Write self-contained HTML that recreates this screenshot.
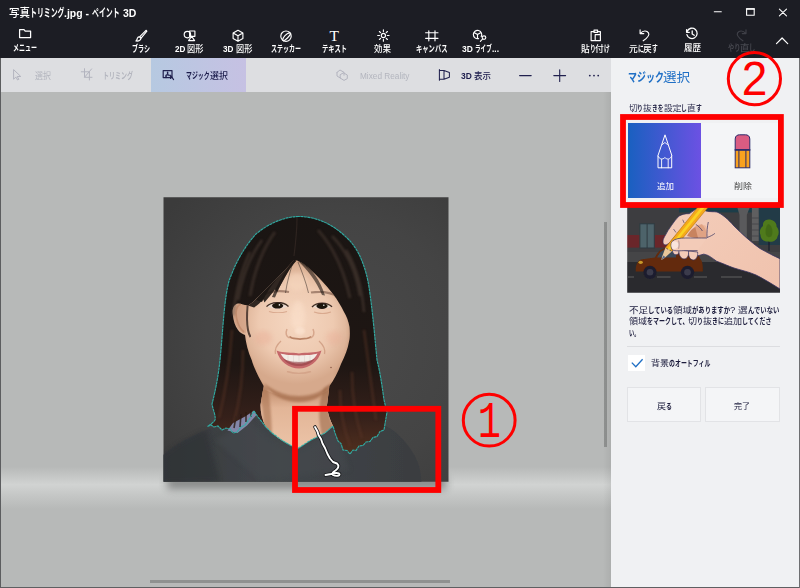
<!DOCTYPE html>
<html lang="ja"><head><meta charset="utf-8"><title>ペイント 3D</title>
<style>
*{box-sizing:border-box;margin:0;padding:0}
html,body{width:800px;height:588px;overflow:hidden;background:#b7b9b8}
body{position:relative;font-family:"Liberation Sans","Noto Sans CJK JP",sans-serif}
.t{position:absolute;white-space:pre;display:block}
.r{display:inline-block;vertical-align:top;height:100%}
.r>span{display:inline-block;transform-origin:0 50%}
#top{position:absolute;left:0;top:0;width:800px;height:58px;background:#1c1d24}
#bar{position:absolute;left:0;top:58px;width:611px;height:34px;background:#dddee1}
#magic{position:absolute;left:151px;top:0;width:95px;height:34px;background:linear-gradient(90deg,#b6c9e1,#c6c1e3)}
#canvas{position:absolute;left:0;top:92px;width:611px;height:496px;background:#b7b9b8;overflow:hidden}
#floor{position:absolute;left:0;top:375px;width:611px;height:42px;background:linear-gradient(180deg,rgba(228,230,229,0) 0%,rgba(228,230,229,.3) 22%,rgba(228,230,229,.58) 42%,rgba(228,230,229,.3) 68%,rgba(228,230,229,0) 100%)}
#pshadow{position:absolute;left:167px;top:385px;width:279px;height:12px;background:#7f8180;filter:blur(4.5px);opacity:.95}
#vs{position:absolute;left:604.2px;top:129.5px;width:2.7px;height:225px;background:#8f9190}
#hs{position:absolute;left:149.5px;top:488.3px;width:300px;height:2.6px;background:#8f9190}
#edge{position:absolute;left:603px;top:0;width:8px;height:496px;background:linear-gradient(90deg,rgba(0,0,0,0),rgba(0,0,0,.06))}
#panel{position:absolute;left:611px;top:58px;width:189px;height:530px;background:#f0f1f3}
#wl{position:absolute;left:0;top:58px;width:1px;height:530px;background:#5c5d5f}
#wb{position:absolute;left:0;top:587px;width:800px;height:1px;background:#5e5f61}
#wr{position:absolute;left:798.5px;top:58px;width:1.5px;height:530px;background:#6e6f71}
#addbtn{position:absolute;left:628px;top:123px;width:73px;height:75px;background:linear-gradient(90deg,#1960c0,#6c51e3)}
#delbtn{position:absolute;left:701px;top:123px;width:80px;height:75px;background:#f4f5f7}
#sep{position:absolute;left:627px;top:346px;width:153px;height:1px;background:#dcdde0}
#chk{position:absolute;left:628px;top:355px;width:17px;height:16px;background:#fff}
.btn{position:absolute;top:387px;height:35px;background:#f4f5f7;border:1px solid #e2e3e6}
.ov{position:absolute;left:0;top:0;width:800px;height:588px;pointer-events:none}
.ic{position:absolute;left:0;top:0;width:800px;height:588px;fill:none;stroke:#fff;stroke-width:1.15;stroke-linecap:round;stroke-linejoin:round}
#tT{position:absolute;left:329.5px;top:27px;font:15.5px/18px "Liberation Serif",serif;color:#fff}
</style></head><body>
<div id="canvas">
<div id="floor"></div>
<div id="pshadow"></div>
<div id="vs"></div><div id="hs"></div><div id="edge"></div>
</div>
<svg class="ov" viewBox="0 0 800 588">
<defs>
<radialGradient id="pbg" cx="335" cy="345" r="215" gradientUnits="userSpaceOnUse"><stop offset="0" stop-color="#4a4a4a"/><stop offset=".6" stop-color="#444"/><stop offset="1" stop-color="#3b3b3b"/></radialGradient>
<radialGradient id="skin" cx="296" cy="322" r="62" gradientUnits="userSpaceOnUse"><stop offset="0" stop-color="#f5d7c1"/><stop offset=".6" stop-color="#eecab1"/><stop offset="1" stop-color="#d6a98c"/></radialGradient>
<linearGradient id="hair" x1="0" y1="216" x2="0" y2="455" gradientUnits="userSpaceOnUse"><stop offset="0" stop-color="#1a1513"/><stop offset=".62" stop-color="#1e1613"/><stop offset=".84" stop-color="#35201a"/><stop offset="1" stop-color="#52301f"/></linearGradient>
<linearGradient id="neck" x1="0" y1="385" x2="0" y2="450" gradientUnits="userSpaceOnUse"><stop offset="0" stop-color="#b98565"/><stop offset=".35" stop-color="#e2b597"/><stop offset="1" stop-color="#ecc4a8"/></linearGradient>
<linearGradient id="cloth" x1="163" y1="0" x2="421" y2="0" gradientUnits="userSpaceOnUse"><stop offset="0" stop-color="#36393c"/><stop offset=".45" stop-color="#42464a"/><stop offset="1" stop-color="#3a3d40"/></linearGradient>
<filter id="b1" x="-10%" y="-10%" width="120%" height="120%"><feGaussianBlur stdDeviation="1"/></filter>
<filter id="b2" x="-20%" y="-20%" width="140%" height="140%"><feGaussianBlur stdDeviation="2.2"/></filter>
<filter id="b05" x="-10%" y="-10%" width="120%" height="120%"><feGaussianBlur stdDeviation=".5"/></filter>
<clipPath id="pc"><rect x="163.500" y="197.300" width="285" height="284.400"/></clipPath>
<path id="sil" d="M299 216.5C284 216.5 268 224 256 234C244 247 235 264 229 281C224 300 223 330 220 360C218 380 214 396 212 404C213 410 216 416 215 420C213 423 210 425 207.500 426.500L211 425L214 427L218 426L222 430L226 428L230 429L233 433L237 432L241 427L245 425L250 418L254 411L258 417L266 427L272 433L283 441L297 449L311 440L325 433L333 426L335 433L338 441L341 443.500L343 450L347 450.500L350 454L353 450L356 450.500L359 446L363 445.500L366 442L370 441.500L373 437.500L377 436.500L380 431.500L384 430L385.500 421L387 412L384 400C382 385 380 372 377 360C375 340 373 314 369 287C365 262 356 246 347 238C335 226 318 216.500 299 216.500Z"/>
</defs>
<g clip-path="url(#pc)">
<rect x="163" y="197" width="286" height="286" fill="url(#pbg)"/>
<!-- clothes -->
<path d="M163 455C176 444 190 436 206 430C222 425 236 422 250 418L335 420L386 426C398 432 408 444 415 456C419 464 421 472 421.500 483L163 483Z" fill="url(#cloth)" filter="url(#b05)"/>
<path d="M250 420C268 440 285 448 297 450C310 445 324 436 334 427L350 470L260 481L215 440Z" fill="#45494d" opacity=".55" filter="url(#b2)"/>
<path d="M163 455C176 444 190 436 206 430L220 481L163 483Z" fill="#2f3235" opacity=".6" filter="url(#b2)"/>
<!-- hair silhouette -->
<use href="#sil" fill="url(#hair)"/>
<!-- collar piece -->
<path d="M233 423L246 416L254 410.500L256.500 415L247 425.500L237.500 433L227.500 430.500Z" fill="#8487a9" filter="url(#b05)"/>
<path d="M236 416L234 428M241 414L240 427M246 412L246 422M251 410L251 417" stroke="#2a1a15" stroke-width="1.6" opacity=".8" filter="url(#b05)"/>
<!-- skin window -->
<path id="skinw" d="M294 260C286 269 276 279 268 287C262 293 256 300 249 305C245 306 241 303 238 303.500C234 304 232 309 232.700 314C233.500 321 235 326 238 330C240 333 243 334 245 335C246 343 248 352 251.700 360C254 368 259 378 263.700 386L260.500 405C260.500 412 262 420 266 427C270 431 276 437 283 441L297 449L311 440L325 433L333 426C329 418 327 410 327 405L329.400 386C334 380 338 372 341 364C345 356 348 348 349 341.500C350 338 350 332 349.500 327C348.500 321 346.500 316 344 312C341 306 337 299 333 294C326 285 318 276 308.800 268C303 263 298 260 294 260Z" fill="url(#skin)"/>
<clipPath id="skc"><use href="#skinw"/></clipPath>
<g clip-path="url(#skc)">
<!-- neck shading -->
<path d="M255 384C270 394 285 398 299 398C313 398 328 393 340 382L340 455L255 455Z" fill="url(#neck)"/>
<path d="M255 380C262 400 266 420 262 436L272 440C272 420 270 400 268 388Z" fill="#a87352" opacity=".6" filter="url(#b1)"/>
<path d="M338 380C328 398 326 412 334 428L322 436C318 420 318 402 324 388Z" fill="#9a6848" opacity=".6" filter="url(#b1)"/>
<!-- hair shadow on face edges -->
<path d="M296 256C282 270 264 290 248 306L240 300L234 304L230 312L226 300L250 270Z" fill="#a06c4c" opacity=".4" filter="url(#b1)"/>
<path d="M294 258C312 268 334 290 346 308C352 320 352 340 346 360L336 376L360 376L362 300L330 262Z" fill="#8f5e42" opacity=".45" filter="url(#b2)"/>
<path d="M244 334C246 350 252 366 262 384L252 384L240 340Z" fill="#a87252" opacity=".5" filter="url(#b1)"/>
<!-- blush / highlights -->
<ellipse cx="263" cy="338" rx="9" ry="7" fill="#e9a791" opacity=".35" filter="url(#b2)"/>
<ellipse cx="334" cy="338" rx="8" ry="7" fill="#e9a791" opacity=".3" filter="url(#b2)"/>
<ellipse cx="298" cy="316" rx="7" ry="15" fill="#fbe0cb" opacity=".6" filter="url(#b2)"/>
<ellipse cx="297" cy="282" rx="10" ry="9" fill="#f7d8c0" opacity=".6" filter="url(#b2)"/>
<!-- ear -->
<path d="M241 304C237 305 235 311 236.500 318C238 325 241 330 244 332" fill="none" stroke="#b98262" stroke-width="1.6" opacity=".8" filter="url(#b05)"/>
<!-- brows -->
<path d="M264 294.500C271 291 280 290.500 289 292" fill="none" stroke="#6e4c3c" stroke-width="2.2" opacity=".55" filter="url(#b05)"/>
<path d="M311 292.500C320 291 330 292 338 296.500" fill="none" stroke="#6e4c3c" stroke-width="2.2" opacity=".55" filter="url(#b05)"/>
<!-- eyes -->
<path d="M267.500 306.200C271 302.200 282 301.600 287.500 306.400C282 309.200 272 309.400 267.500 306.200Z" fill="#e9d9cf" filter="url(#b05)"/>
<path d="M313 306.800C317.500 302.400 326.500 302.400 331 306.600C326.500 309.400 317.500 309.400 313 306.800Z" fill="#e9d9cf" filter="url(#b05)"/>
<ellipse cx="277.600" cy="305.700" rx="5.600" ry="2.900" fill="#1f1410" filter="url(#b05)"/>
<ellipse cx="322" cy="306" rx="5.600" ry="2.900" fill="#1f1410" filter="url(#b05)"/>
<path d="M266.500 306.600C271 301.600 282.500 300.800 288.500 306.400" fill="none" stroke="#2c1b15" stroke-width="1.300" opacity=".9" filter="url(#b05)"/>
<path d="M312 307C317 301.800 327 301.800 332 306.800" fill="none" stroke="#2c1b15" stroke-width="1.300" opacity=".9" filter="url(#b05)"/>
<circle cx="279.400" cy="304.900" r=".8" fill="#fff" opacity=".9"/><circle cx="323.800" cy="305.200" r=".8" fill="#fff" opacity=".9"/>
<path d="M269 311.500C274 313.300 282 313.300 287 311.500" fill="none" stroke="#cf9a7e" stroke-width="1.300" opacity=".7" filter="url(#b05)"/>
<path d="M314 312C319 313.800 326 313.800 331 312" fill="none" stroke="#cf9a7e" stroke-width="1.300" opacity=".7" filter="url(#b05)"/>
<!-- nose -->
<path d="M289.500 336.500C292 339.500 296 338.200 300 339.200C304 338.200 308.500 339.500 311 336.500" fill="none" stroke="#b07759" stroke-width="1.800" opacity=".85" filter="url(#b05)"/>
<path d="M287 329C285 333.500 286.500 337 289.500 338M313 329C315 333.500 313.500 337 310.500 338" fill="none" stroke="#d09d82" stroke-width="1.500" opacity=".8" filter="url(#b05)"/>
<ellipse cx="300" cy="331" rx="5" ry="4" fill="#fbe3d0" opacity=".7" filter="url(#b1)"/>
<!-- smile lines -->
<path d="M281 341C276.500 345 274.500 349 275.500 354M319 341C323.500 345 325.500 349 324.500 354" fill="none" stroke="#c99378" stroke-width="1.3" opacity=".7" filter="url(#b05)"/>
<!-- mouth -->
<path d="M276.500 350.500C284 353.500 291 352 299 353.500C307 352 314 353.500 321.500 350.500C318.500 362 309 368.500 299 368.500C289 368.500 279.500 362 276.500 350.500Z" fill="#c5686b" filter="url(#b05)"/>
<path d="M280.500 353.500C289 356 309 356 317.500 353.500C314 361 306 363.500 299 363.500C292 363.500 284 361 280.500 353.500Z" fill="#f3ece6"/>
<path d="M288 355.300V361.500M293.500 355.700V363M299 355.800V363.400M304.500 355.700V363M310 355.300V361.500" stroke="#cdbfb5" stroke-width=".5" opacity=".6" fill="none"/>
<path d="M283 358.500C290 363 308 363 315 358.500C311 364.500 304 366 299 366C294 366 287 364.500 283 358.500Z" fill="#8f3f45" opacity=".6" filter="url(#b05)"/>
<path d="M287 371.500C294 374 304 374 311 371.500" fill="none" stroke="#cf9c82" stroke-width="1.4" opacity=".7" filter="url(#b05)"/>
<circle cx="331" cy="367.500" r=".8" fill="#7a4a38" opacity=".8"/>
<!-- chin shadow -->
<path d="M264 383C276 393 288 396 299 396C311 396 323 392 331 383C326 395 314 402 299 402C284 402 270 395 264 383Z" fill="#a26b49" opacity=".7" filter="url(#b1)"/>
<!-- fringe wisps -->
<path d="M294 259C286 268 276 279 268 287C262 293 256 300 248 305.500L254 307.500C258 305 261 302 263 299L264.500 302.500C268 298 272 294 275 289.500L277 292C280 286 284 279 288 272C290 268 293 264 296 261Z" fill="#1d1613" opacity=".9"/>
<path d="M247.600 305C247 312 246.500 322 248 330C248.500 333 249.500 335 250.500 337" fill="none" stroke="#2a1a14" stroke-width="2" opacity=".75" filter="url(#b05)"/>
<path d="M238 304C234 306 233 312 234 318C235 324 238 330 243 333L246 333L246 305Z" fill="#c99678" opacity=".45" filter="url(#b05)"/>
<path d="M294 258C280 270 266 284 256 300L262 302C270 286 282 270 296 260Z" fill="#1c1613" opacity=".9"/>
<path d="M295 258C287 268 278 282 272 297L275 297.500C281 283 288 270 297 260Z" fill="#1c1613" opacity=".7"/>
<path d="M294 258C310 268 326 282 336 298L340 298C332 280 316 266 296 256Z" fill="#1c1613" opacity=".9"/>
<path d="M296 259C306 268 316 280 322 295L325 295.500C320 279 310 267 298 258Z" fill="#1c1613" opacity=".6"/>
<path d="M293 262C290 272 287 282 285.500 293M298 262C302 272 306 282 308.500 293" fill="none" stroke="#1c1613" stroke-width="1" opacity=".45"/>
</g>
<!-- hair highlights -->
<path d="M262 240C250 256 242 278 238 300M332 236C346 250 356 272 360 296M250 252C242 268 236 290 233 316M346 250C356 266 362 288 364 312" fill="none" stroke="#54443b" stroke-width="2.500" opacity=".5" filter="url(#b1)"/>
<path d="M275 232C262 250 254 272 250 296M318 230C334 248 344 270 350 298" fill="none" stroke="#4d3d35" stroke-width="3" opacity=".5" filter="url(#b1)"/>
<path d="M232 330C230 360 226 390 219 418M364 330C368 360 372 390 376 420M243 350C243 375 240 400 234 422M352 372C352 395 356 420 362 438M340 390C340 410 344 430 350 446" fill="none" stroke="#5a3626" stroke-width="2.500" opacity=".5" filter="url(#b1)"/>
<path d="M297 218C297 228 296 240 294 256" fill="none" stroke="#3a2d28" stroke-width="1.2" opacity=".6"/>
<!-- selection outline -->
<use href="#sil" fill="none" stroke="#2fb0a8" stroke-width="1.150" stroke-dasharray="3 .5" opacity=".95"/>
<!-- squiggle -->
<g fill="none" stroke-linecap="round" stroke-linejoin="round" stroke="#15171a" stroke-width="3.6">
<path id="sq" d="M315 427L317.500 431.500L318.500 435L321 439L322.500 443.500L325 448L327.500 454L330 458.500L333 462L337 463.500C339.500 465.500 338.500 468.500 335.500 470.500C333 472 331.500 473.500 333 475C336 476.500 340 476 339.500 474C339 472.500 334 473 331 474L325.500 475"/>
<use href="#sq" stroke="#fff" stroke-width="1.9"/>
</g>
</g>
</svg>

<div id="top"></div>
<div id="bar"><div id="magic"></div></div>
<div id="panel"></div>
<div id="addbtn"></div><div id="delbtn"></div>
<div id="sep"></div><div id="chk"></div>
<svg class="ov" viewBox="0 0 800 588">
<defs>
<clipPath id="ic"><rect x="627.200" y="203" width="152.800" height="89.800"/></clipPath>
<filter id="ib" x="-5%" y="-5%" width="110%" height="110%"><feGaussianBlur stdDeviation=".35"/></filter>
<linearGradient id="hand" x1="690" y1="215" x2="770" y2="290" gradientUnits="userSpaceOnUse"><stop offset="0" stop-color="#f3cbb8"/><stop offset="1" stop-color="#f0c3ae"/></linearGradient>
</defs>
<!-- pencil (add) icon -->
<g fill="none" stroke="#fff" stroke-width="1" stroke-linejoin="round" stroke-linecap="round">
<path d="M664.900 135.200L658 155.500V167.800H671.700V155.500Z"/>
<path d="M658 156C659.500 159.500 662.500 160 664.900 157.500C667.300 160 670.300 159.500 671.700 156M661.600 159.500V167.800M668.200 159.500V167.800M662.300 144.500L664.900 142.500L667.500 144.500" stroke-width=".9"/>
</g>
<!-- eraser (remove) icon -->
<g stroke="#2b2b6b" stroke-width="1">
<path d="M735.200 149.600V139C735.200 135.800 737.500 134.800 739.500 134.800H745.500C747.500 134.800 749.800 135.800 749.800 139V149.600Z" fill="#da5c82"/>
<rect x="735.200" y="150.200" width="14.600" height="17.600" fill="#f9a11f"/>
<path d="M738.900 150.200V167.800M745.900 150.200V167.800M734.400 149.900H750.600" fill="none"/>
</g>
<!-- check mark -->
<path d="M631.800 362.600L635.800 366.800L642.600 359.200" fill="none" stroke="#1f6fc5" stroke-width="1.300"/>
<!-- illustration -->
<g clip-path="url(#ic)" filter="url(#ib)">
<rect x="627" y="203" width="153" height="90" fill="#3d3d3f"/>
<rect x="679" y="203" width="101" height="9.500" fill="#1f3d48"/>
<rect x="758.700" y="203" width="22" height="42" fill="#203a47"/>
<!-- building right: pillar & blocks -->
<path d="M737.500 208H749.500L746.800 215V252H739.500V215Z" fill="#5a5a5c"/>
<rect x="751.900" y="208" width="6.800" height="33" fill="#5e5e60"/>
<path d="M752 218H759M752 224H759M752 230H759M752 236H759M752 242H759M752 248H759" stroke="#444446" stroke-width=".8"/>
<rect x="627" y="235" width="60" height="12.600" fill="#6b2529"/>
<!-- window -->
<rect x="639.900" y="223.800" width="14.400" height="24.200" fill="#4d636b" stroke="#2e3a40" stroke-width="1"/>
<path d="M647.100 223.800V248" stroke="#2e3a40" stroke-width="1"/>
<!-- sidewalk / road -->
<rect x="627" y="252" width="153" height="10" fill="#454547"/>
<rect x="627" y="262" width="153" height="31" fill="#2b2b2d"/>
<path d="M628 277H634M657 277H670.500M694 277H707M721 277H742" stroke="#4e4e50" stroke-width="1.600"/>
<!-- tree -->
<path d="M769 238V251" stroke="#1e2230" stroke-width="1.400"/>
<path d="M768.500 219.500C764.500 219.500 762.500 223 763 226C760 228 759 232 760.500 235C760.500 239 764 242 768.500 241.500C772.500 242.500 777 240.500 777.500 236.500C779.500 233.500 779 229 776.500 226.500C777 222.500 773 219.500 768.500 219.500Z" fill="#4f7a1b"/>
<path d="M768.500 224C766 226 765 230 766 235C767.500 238 771 238 772 235C773 230 772 226 768.500 224Z" fill="#3f6414" opacity=".7"/>
<!-- car -->
<path d="M635.800 271.500C635.500 266 637 261 641 259.500L655 257.500C657 253 660 249.500 664 248.500H690C695 249 698 253 700 258.500C702 260.500 703 264 702.800 271.500Z" fill="#642909"/>
<path d="M657 257.500C659 253.500 661.500 250.500 664.500 249.800H676V257.500Z" fill="#3b4a58"/>
<ellipse cx="640.700" cy="262.300" rx="2.200" ry="1.600" fill="#c99a2a"/>
<circle cx="650" cy="272.300" r="6.600" fill="#1d1d2e"/><circle cx="650" cy="272.300" r="3.300" fill="#3a3a4c"/>
<circle cx="687.500" cy="272.300" r="6.600" fill="#1d1d2e"/><circle cx="687.500" cy="272.300" r="3.300" fill="#3a3a4c"/>
<!-- hand: arm + back of hand -->
<path d="M689 214C694 209 700 207 706 211C710 212 714 211.500 717 212C722 214 728 219 734 226C742 234 752 243 760 248.500C768 253 774 256 780 258.700V289C772 284 764 279 756 275C748 271.500 740 270 734 268C728 266 722 263 716.700 261.300C712 258 708 254.500 703.600 254.200L697 256L672 250L668 240Z" fill="url(#hand)" stroke="#34305e" stroke-width=".800"/>
<!-- shaded web between finger and thumb -->
<path d="M687 236C690 230 696 225 702 224.500C706 228 707 233 706 238C700 238.500 693 238 687 236Z" fill="#c8835f"/>
<path d="M695 226C698 224 703 224 706 226C707.500 230 707.500 234 706 238L698 238Z" fill="#e9b094" opacity=".7"/>
<!-- curled fingers -->
<path d="M672.600 249C672 252 673.500 254.800 676 254.800C678.500 254.800 679.500 252 679.500 250Z" fill="#f3cbb8" stroke="#34305e" stroke-width=".700"/>
<path d="M679 250C678.500 254 680 258.500 684 259C687.500 259 689 255 688.700 251Z" fill="#f3cbb8" stroke="#34305e" stroke-width=".700"/>
<path d="M688.700 251C688 255.500 689.500 260 693.500 260C697 259.500 698 255.500 697.600 252Z" fill="#f3cbb8" stroke="#34305e" stroke-width=".700"/>
<!-- index finger (left of pencil) -->
<path d="M689.300 213.700C685 213.500 682 214.500 679 216C676 219 673.500 222.500 671.400 225.600C669 229 667 232 665.500 235C664 237.500 663 239.500 663 241C662.800 243 663.500 244.500 665 245C667 245 669 243.500 671 241L702 205Z" fill="#f3cbb8" stroke="#34305e" stroke-width=".700"/>
<path d="M682.700 219.700L684.200 223M673.500 229L676 232.500" fill="none" stroke="#34305e" stroke-width=".600"/>
<!-- pencil -->
<path d="M701.200 203L711.600 203L672 251.200L665.500 247.600Z" fill="#f5a91a"/>
<path d="M704.600 203L708.200 203L669.800 250L667.600 248.800Z" fill="#fbd224"/>
<path d="M701.200 203L665.500 247.600M711.600 203L672 251.200" fill="none" stroke="#a8680c" stroke-width=".500"/>
<path d="M665.500 247.600L667.500 249.500L669 249L670 251L672 251.200L664 258.500L661.300 260.100L662 257Z" fill="#e8c69a"/>
<path d="M663.500 255.500L661.300 260.100L665.500 257.200Z" fill="#5a6a8a"/>
<!-- thumb -->
<path d="M672 241.500C670.500 244 670.500 248 672.500 250C675 251.200 680 250.800 686 250.600H698L707 238C700 238 692 238 685.700 238C680 238 675 238.500 672 241.500Z" fill="#f3cbb8"/>
<path d="M707 238C700 238 692 238 685.700 238C680 238 675 238.500 672 241.500C670.500 244 670.500 248 672.500 250C675 251.200 680 250.800 686 250.600L697.600 250.600" fill="none" stroke="#34305e" stroke-width=".700"/>
<path d="M672 242C671 244.500 671.200 247.500 673 249C675.500 249.500 678 248 678.600 245C678.600 242.500 676 240 672 242Z" fill="#f9e4dc"/>
<path d="M678.600 240.500C679.300 243 679.300 246 678.600 248.800" fill="none" stroke="#34305e" stroke-width=".500" opacity=".7"/>
<!-- creases -->
<path d="M695.800 224.400C698.500 226 701 228.500 702.400 231M708.300 222C707.200 227 706.800 232 707 237.500M707 237.500C710 236.500 713 235 714.900 233.400" fill="none" stroke="#34305e" stroke-width=".700"/>
</g>
</svg>

<div class="btn" style="left:627px;width:74px"></div>
<div class="btn" style="left:705px;width:75px"></div>
<div id="wl"></div><div id="wb"></div><div id="wr"></div>
<div id="tT">T</div>
<svg class="ic" viewBox="0 0 800 588">
<!-- window controls -->
<path d="M714.3 11.8H721.3" stroke-width="1.1"/>
<rect x="746.6" y="8.7" width="7.6" height="6.6" stroke-width="1.1"/><path d="M746.6 9H754.2" stroke-width="1.6"/>
<path d="M779.4 9.1L786.5 15.8M786.5 9.1L779.4 15.8" stroke-width="1.1"/>
<!-- menu folder -->
<path d="M19.6 37.6V29.5H24L25.2 31.2H30.6V37.6Z" stroke-width="1.25"/>
<!-- brush -->
<path d="M146 30.3L146.9 31.1L141.3 37.9L139.8 36.6Z"/>
<path d="M139.4 36.9L141 38.4C140.6 40.4 138.6 41.3 135.9 41C137.2 40.2 137 39 137.5 38C138 37.1 138.7 36.8 139.4 36.9Z"/>
<!-- 2d shapes -->
<circle cx="187.4" cy="34.6" r="3.2"/><rect x="189.6" y="31" width="5.3" height="5.3"/><path d="M188.6 40.6L191.6 36.2L194.6 40.6Z"/>
<!-- 3d cube -->
<path d="M238 30.3L242.9 33V38.6L238 41.3L233.1 38.6V33ZM233.1 33L238 35.8L242.9 33M238 35.8V41.3"/>
<!-- sticker -->
<circle cx="286" cy="36.2" r="5.2"/><path d="M282.6 40.2C283 37 286 33.6 289.9 32.6M283.6 40.9C285.5 40 289.6 36.5 290.6 33.8"/>
<!-- effects sun -->
<circle cx="383.4" cy="35.5" r="2.1"/>
<path d="M383.4 29.8V31.6M383.4 39.4V41.2M377.7 35.5H379.5M387.3 35.5H389.1M379.4 31.5L380.6 32.7M386.2 38.3L387.4 39.5M387.4 31.5L386.2 32.7M380.6 38.3L379.4 39.5"/>
<!-- canvas -->
<path d="M425.6 32.7H438M425.6 38.3H438M428.8 30.8V40.8M435 30.8V40.8"/>
<!-- 3d library -->
<path d="M481.2 36.6A4.2 4.2 0 1 0 478.6 38.6M474 32.6L477.5 34.6L481 32.6M477.5 34.6V38.6"/>
<circle cx="484" cy="37.6" r="1.8"/><path d="M482.7 38.9L480.4 41.3"/>
<!-- paste -->
<path d="M594 31.6H591.1V40.6H594.6M597.6 31.6H600.4V34"/><rect x="594" y="30.1" width="3.6" height="2.2"/><rect x="595.2" y="34.6" width="5.2" height="6"/>
<!-- undo -->
<path d="M640.1 29.9V33.6H643.8M640.4 33.3C643 30.4 646.9 30.2 648.5 32.9C650 35.5 647.2 38.1 643.2 40.8"/>
<!-- history -->
<path d="M687.2 31.2A5.2 5.2 0 1 1 686.9 34.6M686.6 29.6V32.3H689.3M692.2 30.9V34L694.2 35.3" stroke-width="1.3"/>
<!-- redo (disabled) -->
<g stroke="#3f4048"><path d="M746 29.9V33.6H742.3M745.7 33.3C743.1 30.4 739.2 30.2 737.6 32.9C736.1 35.5 738.9 38.1 742.9 40.8"/></g>
<!-- chevron -->
<path d="M776.5 43.6L782.1 38L787.7 43.6" stroke-width="1.2"/>
<!-- bar: select arrow / crop (disabled) -->
<g stroke="#b3b4bf" stroke-width="1">
<path d="M13.6 70V79.2L15.9 77.1L17.6 80L18.8 79.3L17.2 76.5H20.4Z"/>
<path d="M84.5 68.7V77.3H92M81.3 71.8H89.4V80M91.6 68.9L84.6 77.2"/>
<path d="M337 72.4L340 70L344 72.3V75.2M337 72.4V76L340.5 78.2M340.5 74.5L343.5 72.8L347.3 75V78.6L344 80.4L340.5 78.2Z"/>
</g>
<!-- magic select -->
<g stroke="#20204e" stroke-width="1.2">
<rect x="163.2" y="70.6" width="8.8" height="7"/>
<path d="M166 77.4V75.6C166 74.6 169.2 74.6 169.2 75.6M167.6 72.2V73.6" stroke-width="1.5"/>
<path d="M170.6 75.4L173.6 79.6M170.6 75.4V78.4" stroke-width="1.1"/>
<path d="M439.4 69.5V80.2M439.4 70.4H444L449.4 72.4V77.2L444 79.2H439.4M444 70.4V79.2" stroke-width="1.05"/>
<path d="M519.6 75.6H531.2M553.8 75.6H565.6M559.7 69.7V81.5" stroke-width="1.1"/>
</g>
<g fill="#20204e" stroke="none"><circle cx="589.8" cy="75.6" r=".9"/><circle cx="594" cy="75.6" r=".9"/><circle cx="598.2" cy="75.6" r=".9"/></g>
</svg>

<div class="t" style="left:8.8px;top:3.5px;font-size:11.5px;line-height:18px;height:18px;color:#fff;font-weight:500"><span class="r" style="width:20.91px"><span style="transform:scaleX(0.909)">写真</span></span><span class="r" style="width:34.51px;font-weight:700"><span style="transform:scaleX(0.600)">トリミング</span></span><span class="r" style="width:27.89px;font-weight:700"><span style="transform:scaleX(0.909)">.jpg - </span></span><span class="r" style="width:27.61px;font-weight:700"><span style="transform:scaleX(0.600)">ペイント</span></span><span class="r" style="width:16.28px;font-weight:700"><span style="transform:scaleX(0.909)"> 3D</span></span></div>
<div class="t" style="left:13px;top:40.5px;font-size:9px;line-height:14px;height:14px;color:#fff;font-weight:500"><span class="r" style="width:24.00px;font-weight:700"><span style="transform:scaleX(0.666)">メニュー</span></span></div>
<div class="t" style="left:132px;top:42.3px;font-size:9px;line-height:14px;height:14px;color:#fff;font-weight:500"><span class="r" style="width:18.00px;font-weight:700"><span style="transform:scaleX(0.671)">ブラシ</span></span></div>
<div class="t" style="left:174.5px;top:42.3px;font-size:9px;line-height:14px;height:14px;color:#fff;font-weight:500"><span class="r" style="width:12.69px;font-weight:700"><span style="transform:scaleX(0.905)">2D </span></span><span class="r" style="width:16.31px"><span style="transform:scaleX(0.905)">図形</span></span></div>
<div class="t" style="left:223px;top:42.3px;font-size:9px;line-height:14px;height:14px;color:#fff;font-weight:500"><span class="r" style="width:12.69px;font-weight:700"><span style="transform:scaleX(0.905)">3D </span></span><span class="r" style="width:16.31px"><span style="transform:scaleX(0.905)">図形</span></span></div>
<div class="t" style="left:271px;top:42.3px;font-size:9px;line-height:14px;height:14px;color:#fff;font-weight:500"><span class="r" style="width:30.00px;font-weight:700"><span style="transform:scaleX(0.666)">ステッカー</span></span></div>
<div class="t" style="left:322px;top:42.3px;font-size:9px;line-height:14px;height:14px;color:#fff;font-weight:500"><span class="r" style="width:25.00px;font-weight:700"><span style="transform:scaleX(0.700)">テキスト</span></span></div>
<div class="t" style="left:374px;top:42.3px;font-size:9px;line-height:14px;height:14px;color:#fff;font-weight:500"><span class="r" style="width:17.00px"><span style="transform:scaleX(0.944)">効果</span></span></div>
<div class="t" style="left:416px;top:42.3px;font-size:9px;line-height:14px;height:14px;color:#fff;font-weight:500"><span class="r" style="width:31.50px;font-weight:700"><span style="transform:scaleX(0.700)">キャンバス</span></span></div>
<div class="t" style="left:462px;top:42.3px;font-size:9px;line-height:14px;height:14px;color:#fff;font-weight:500"><span class="r" style="width:13.17px;font-weight:700"><span style="transform:scaleX(0.940)">3D </span></span><span class="r" style="width:16.76px;font-weight:700"><span style="transform:scaleX(0.620)">ライブ</span></span><span class="r" style="width:7.06px;font-weight:700"><span style="transform:scaleX(0.940)">...</span></span></div>
<div class="t" style="left:581px;top:41.6px;font-size:9px;line-height:14px;height:14px;color:#fff;font-weight:500"><span class="r" style="width:8.73px"><span style="transform:scaleX(0.969)">貼</span></span><span class="r" style="width:5.77px;font-weight:700"><span style="transform:scaleX(0.639)">り</span></span><span class="r" style="width:8.73px"><span style="transform:scaleX(0.969)">付</span></span><span class="r" style="width:5.77px;font-weight:700"><span style="transform:scaleX(0.639)">け</span></span></div>
<div class="t" style="left:629px;top:41.6px;font-size:9px;line-height:14px;height:14px;color:#fff;font-weight:500"><span class="r" style="width:8.73px"><span style="transform:scaleX(0.969)">元</span></span><span class="r" style="width:5.77px;font-weight:700"><span style="transform:scaleX(0.639)">に</span></span><span class="r" style="width:8.73px"><span style="transform:scaleX(0.969)">戻</span></span><span class="r" style="width:5.77px;font-weight:700"><span style="transform:scaleX(0.639)">す</span></span></div>
<div class="t" style="left:684px;top:40.5px;font-size:9px;line-height:14px;height:14px;color:#fff;font-weight:500"><span class="r" style="width:17.00px"><span style="transform:scaleX(0.944)">履歴</span></span></div>
<div class="t" style="left:727.5px;top:41.4px;font-size:9px;line-height:14px;height:14px;color:#46474f;font-weight:500"><span class="r" style="width:12.40px;font-weight:700"><span style="transform:scaleX(0.688)">やり</span></span><span class="r" style="width:9.40px"><span style="transform:scaleX(1.043)">直</span></span><span class="r" style="width:6.20px;font-weight:700"><span style="transform:scaleX(0.688)">し</span></span></div>
<div class="t" style="left:35px;top:68.5px;font-size:9px;line-height:14px;height:14px;color:#b3b5be;font-weight:400"><span class="r" style="width:16.00px"><span style="transform:scaleX(0.888)">選択</span></span></div>
<div class="t" style="left:103px;top:68.5px;font-size:9px;line-height:14px;height:14px;color:#b3b5be;font-weight:400"><span class="r" style="width:30.00px;font-weight:600"><span style="transform:scaleX(0.666)">トリミング</span></span></div>
<div class="t" style="left:186px;top:68.5px;font-size:9px;line-height:14px;height:14px;color:#1b1b4b;font-weight:500"><span class="r" style="width:23.61px;font-weight:700"><span style="transform:scaleX(0.655)">マジック</span></span><span class="r" style="width:17.89px"><span style="transform:scaleX(0.993)">選択</span></span></div>
<div class="t" style="left:359.5px;top:68.5px;font-size:9px;line-height:14px;height:14px;color:#b3b5be;font-weight:400"><span class="r" style="width:49.50px"><span style="transform:scaleX(0.916)">Mixed Reality</span></span></div>
<div class="t" style="left:460.5px;top:68.5px;font-size:9px;line-height:14px;height:14px;color:#1b1b4b;font-weight:500"><span class="r" style="width:13.13px;font-weight:700"><span style="transform:scaleX(0.937)">3D </span></span><span class="r" style="width:16.87px"><span style="transform:scaleX(0.937)">表示</span></span></div>
<div class="t" style="left:627.5px;top:68.0px;font-size:12.5px;line-height:20px;height:20px;color:#1f6fc5;font-weight:400"><span class="r" style="width:35.84px;font-weight:600"><span style="transform:scaleX(0.717)">マジック</span></span><span class="r" style="width:27.16px"><span style="transform:scaleX(1.086)">選択</span></span></div>
<div class="t" style="left:628.7px;top:100.8px;font-size:8.5px;line-height:14px;height:14px;color:#2e2e4e;font-weight:400"><span class="r" style="width:8.77px"><span style="transform:scaleX(1.030)">切</span></span><span class="r" style="width:5.79px;font-weight:600"><span style="transform:scaleX(0.680)">り</span></span><span class="r" style="width:8.77px"><span style="transform:scaleX(1.030)">抜</span></span><span class="r" style="width:11.57px;font-weight:600"><span style="transform:scaleX(0.680)">きを</span></span><span class="r" style="width:17.53px"><span style="transform:scaleX(1.030)">設定</span></span><span class="r" style="width:5.79px;font-weight:600"><span style="transform:scaleX(0.680)">し</span></span><span class="r" style="width:8.77px"><span style="transform:scaleX(1.030)">直</span></span><span class="r" style="width:5.79px;font-weight:600"><span style="transform:scaleX(0.680)">す</span></span></div>
<div class="t" style="left:656.5px;top:179.0px;font-size:8.5px;line-height:14px;height:14px;color:#fff;font-weight:400"><span class="r" style="width:17.00px"><span style="transform:scaleX(0.999)">追加</span></span></div>
<div class="t" style="left:733.5px;top:179.0px;font-size:8.5px;line-height:14px;height:14px;color:#444;font-weight:400"><span class="r" style="width:18.00px"><span style="transform:scaleX(1.058)">削除</span></span></div>
<div class="t" style="left:628.5px;top:302.5px;font-size:8.5px;line-height:14px;height:14px;color:#1c1c3c;font-weight:400"><span class="r" style="width:19.20px"><span style="transform:scaleX(1.129)">不足</span></span><span class="r" style="width:25.14px;font-weight:600"><span style="transform:scaleX(0.745)">している</span></span><span class="r" style="width:19.20px"><span style="transform:scaleX(1.129)">領域</span></span><span class="r" style="width:38.00px;font-weight:600"><span style="transform:scaleX(0.745)">がありますか</span></span><span class="r" style="width:8.01px"><span style="transform:scaleX(1.129)">? </span></span><span class="r" style="width:9.61px"><span style="transform:scaleX(1.129)">選</span></span><span class="r" style="width:31.34px;font-weight:600"><span style="transform:scaleX(0.745)">んでいない</span></span></div>
<div class="t" style="left:628.5px;top:314.3px;font-size:8.5px;line-height:14px;height:14px;color:#1c1c3c;font-weight:400"><span class="r" style="width:18.16px"><span style="transform:scaleX(1.067)">領域</span></span><span class="r" style="width:41.44px;font-weight:600"><span style="transform:scaleX(0.704)">をマークして、</span></span><span class="r" style="width:9.09px"><span style="transform:scaleX(1.067)">切</span></span><span class="r" style="width:6.00px;font-weight:600"><span style="transform:scaleX(0.704)">り</span></span><span class="r" style="width:9.09px"><span style="transform:scaleX(1.067)">抜</span></span><span class="r" style="width:11.99px;font-weight:600"><span style="transform:scaleX(0.704)">きに</span></span><span class="r" style="width:18.16px"><span style="transform:scaleX(1.067)">追加</span></span><span class="r" style="width:29.58px;font-weight:600"><span style="transform:scaleX(0.704)">してくださ</span></span></div>
<div class="t" style="left:628.5px;top:326.0px;font-size:8.5px;line-height:14px;height:14px;color:#1c1c3c;font-weight:400"><span class="r" style="width:10.50px;font-weight:600"><span style="transform:scaleX(0.617)">い。</span></span></div>
<div class="t" style="left:650.7px;top:356.0px;font-size:8.5px;line-height:14px;height:14px;color:#1c1c3c;font-weight:400"><span class="r" style="width:18.02px"><span style="transform:scaleX(1.059)">背景</span></span><span class="r" style="width:41.48px;font-weight:600"><span style="transform:scaleX(0.699)">のオートフィル</span></span></div>
<div class="t" style="left:657px;top:398.5px;font-size:8.5px;line-height:14px;height:14px;color:#1c1c3c;font-weight:400"><span class="r" style="width:9.04px"><span style="transform:scaleX(1.061)">戻</span></span><span class="r" style="width:5.96px;font-weight:600"><span style="transform:scaleX(0.700)">る</span></span></div>
<div class="t" style="left:734px;top:398.5px;font-size:8.5px;line-height:14px;height:14px;color:#1c1c3c;font-weight:400"><span class="r" style="width:16.00px"><span style="transform:scaleX(0.940)">完了</span></span></div>
<svg class="ov" viewBox="0 0 800 588">
<rect x="623" y="117" width="157.900" height="88" fill="none" stroke="#fe0000" stroke-width="5.800"/>
<rect x="295" y="408.800" width="143.300" height="81.200" fill="none" stroke="#fe0000" stroke-width="5.800"/>
<circle cx="754.400" cy="78.700" r="26.100" fill="none" stroke="#fe0000" stroke-width="3"/>
<text transform="translate(754.450 95.300) scale(.96 1)" x="-13.200" y="0" font-family="Liberation Sans, sans-serif" font-size="48" fill="#fe0000">2</text>
<circle cx="489.200" cy="420.200" r="25.900" fill="none" stroke="#fe0000" stroke-width="3"/>
<text transform="translate(489.500 436.800) scale(.76 1)" x="-15.600" y="0" font-family="Liberation Mono, monospace" font-size="51" fill="#fe0000">1</text>
</svg>

</body></html>
